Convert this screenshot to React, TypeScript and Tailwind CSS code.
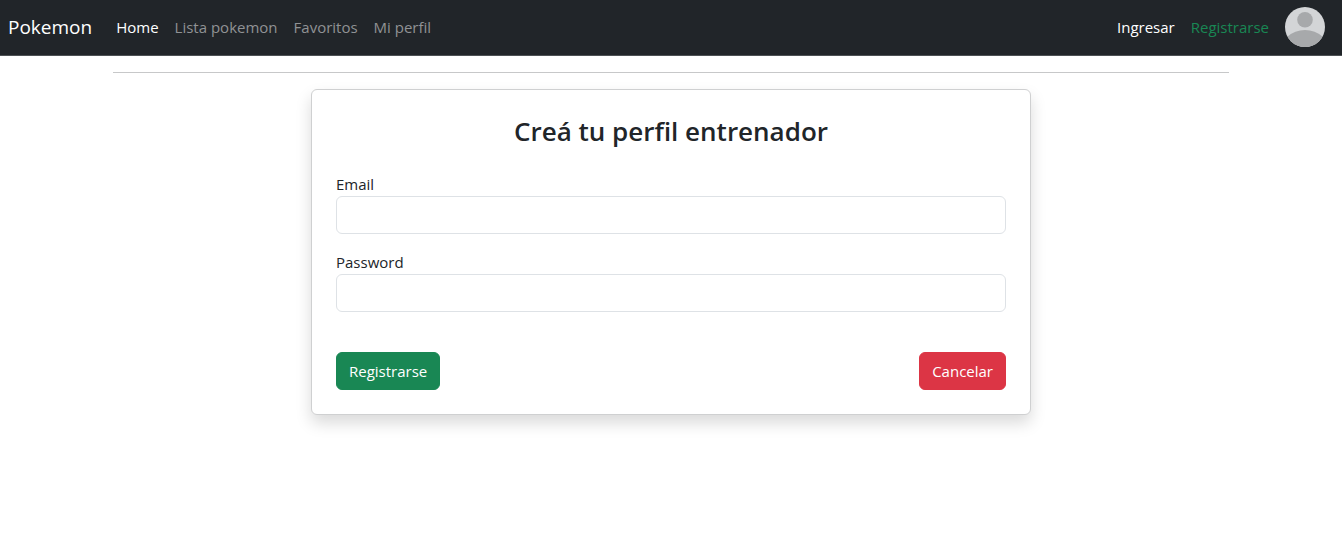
const navLinks = ["Lista pokemon", "Favoritos", "Mi perfil"];

function Avatar() {
  return (
    <svg viewBox="0 0 40 40" className="size-10" role="img" aria-label="Avatar">
      <defs>
        <clipPath id="avatar-circle">
          <circle cx="20" cy="20" r="20" />
        </clipPath>
      </defs>
      <g clipPath="url(#avatar-circle)">
        <rect width="40" height="40" fill="#d3d5d7" />
        <circle cx="20" cy="12.8" r="7.8" fill="#a7a9ab" />
        <ellipse cx="20" cy="46" rx="25" ry="23" fill="#a7a9ab" />
      </g>
    </svg>
  );
}

function Field({ id, label, type }: { id: string; label: string; type: string }) {
  return (
    <div className="mb-4">
      <label htmlFor={id} className="block">
        {label}
      </label>
      <input
        id={id}
        type={type}
        className="block h-[38px] w-full rounded-md border border-[#dee2e6] bg-white px-3 outline-none focus:border-[#86b7fe]"
      />
    </div>
  );
}

export default function App() {
  return (
    <div className="min-h-screen bg-white font-['Segoe_UI','Open_Sans',sans-serif] text-[15px] leading-6 text-[#212529]">
      <nav className="flex h-14 items-center justify-between border-b border-[#4d5154] bg-[#212529] pr-[17px] pb-px pl-2">
        <div className="flex items-center">
          <a href="#" className="mr-6 text-[19px] leading-8 text-white">
            Pokemon
          </a>
          <div className="flex gap-4">
            <a href="#" className="text-white">
              Home
            </a>
            {navLinks.map((link) => (
              <a key={link} href="#" className="text-[#909294]">
                {link}
              </a>
            ))}
          </div>
        </div>
        <div className="flex items-center gap-4">
          <a href="#" className="text-white">
            Ingresar
          </a>
          <a href="#" className="text-[#198754]">
            Registrarse
          </a>
          <Avatar />
        </div>
      </nav>
      <main className="mx-auto max-w-[1140px] px-3">
        <hr className="my-4 border-[#c7c8c9]" />
        <form className="mx-auto max-w-[720px] rounded-md border border-[#cfd0d1] bg-white p-6 shadow-[0_8px_16px_rgba(0,0,0,0.15)]">
          <h1 className="mb-6 text-center text-[26px] leading-[34px] font-semibold">
            Creá tu perfil entrenador
          </h1>
          <Field id="email" label="Email" type="email" />
          <Field id="password" label="Password" type="password" />
          <div className="mt-10 flex justify-between">
            <button type="submit" className="h-[38px] rounded-md border border-[#198754] bg-[#198754] px-3 text-white">
              Registrarse
            </button>
            <button type="button" className="h-[38px] rounded-md border border-[#dc3545] bg-[#dc3545] px-3 text-white">
              Cancelar
            </button>
          </div>
        </form>
      </main>
    </div>
  );
}
